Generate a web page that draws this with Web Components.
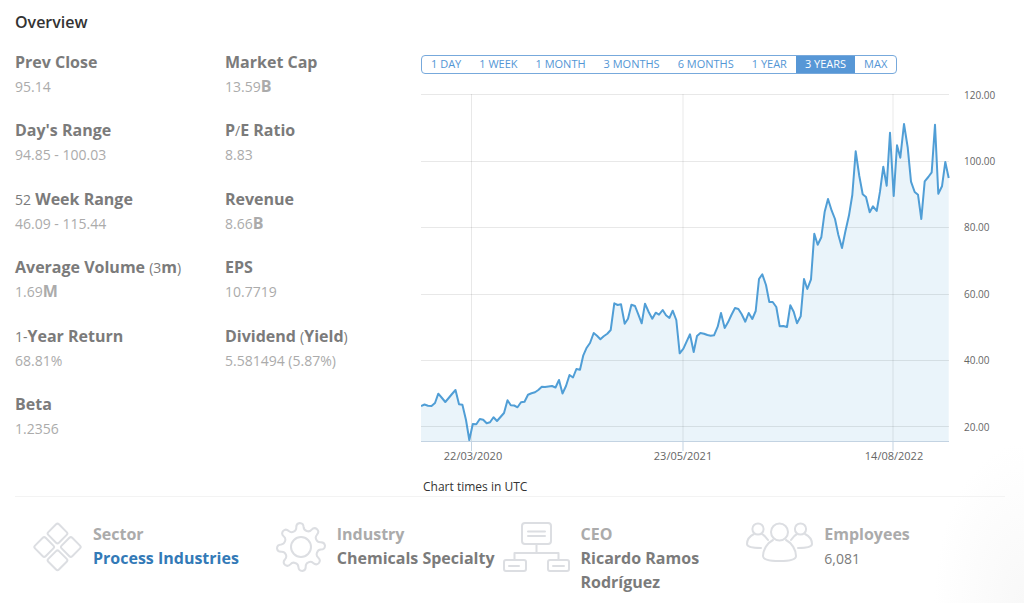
<!DOCTYPE html>
<html lang="en">
<head>
<meta charset="utf-8">
<meta name="viewport" content="width=device-width, initial-scale=1">
<title>Overview</title>
<style>
  html { min-height: 100%; background: #fff; }
  body { margin: 0; min-height: 100vh; font-family: "Open Sans", "Noto Sans", sans-serif;
    background: radial-gradient(ellipse 90px 160px at 100% 100%, #f8f8f8, #fff) no-repeat; }
</style>
</head>
<body>
<stock-overview></stock-overview>

<script>
const define = (name, html, setup) => {
  const template = document.createElement('template');
  template.innerHTML = html.trim();
  customElements.define(name, class extends HTMLElement {
    constructor() {
      super();
      this.attachShadow({ mode: 'open' }).append(template.content.cloneNode(true));
    }
    connectedCallback() { if (setup) setup(this, this.shadowRoot); }
  });
};

/* One bold label with its figure below. */
define('stat-item', `
  <style>
    :host { display: block; font-size: 16px; line-height: 24px; font-weight: 700; white-space: nowrap; }
    .label { color: #7b7b7b; }
    .value { color: #ababab; }
  </style>
  <div class="label"><slot name="label"></slot></div>
  <div class="value"><slot></slot></div>`);

/* Light numerals inside bold text. */
define('light-num', `<style>:host { font-size: 14px; font-weight: 400; line-height: 1; }</style><slot></slot>`);

define('range-tabs', `
  <style>
    :host { display: inline-flex; box-sizing: border-box; border: 1px solid #77a9dc; border-radius: 4px; overflow: hidden; }
    button { font: 400 11px/16px "Open Sans", sans-serif; color: #5396d5; background: none; border: 0; margin: 0;
      padding: 0 9px 1px; white-space: nowrap; cursor: pointer; }
    button[aria-pressed="true"] { background: #5797d6; color: #fff; }
  </style>`, (host, root) => {
  for (const name of host.getAttribute('options').split(',')) {
    const b = document.createElement('button');
    b.type = 'button';
    b.textContent = name;
    b.setAttribute('aria-pressed', name === host.getAttribute('selected'));
    b.onclick = () => root.querySelectorAll('button').forEach(x => x.setAttribute('aria-pressed', x === b));
    root.append(b);
  }
});

define('price-chart', `
  <style>
    :host { display: block; }
    svg { display: block; width: 100%; height: auto; font-family: "Open Sans", sans-serif; font-size: 11px; }
    .grid { stroke: #000; stroke-opacity: .09; fill: none; }
    .axis { stroke: #c3d3e2; fill: none; }
    .area { fill: #eaf4fa; }
    .line { fill: none; stroke: #509ed6; stroke-width: 2; stroke-linejoin: round; }
    text { fill: #666; }
    .dates { text-anchor: middle; }
    .prices { font-size: 10px; }
  </style>
  <svg viewBox="421 86 584 378" role="img" aria-label="Share price over three years">
    <path class="area"/>
    <path class="grid" d="M421 94.5H949M421 161.500H949M421 227.500H949M421 294.500H949M421 360.500H949M421 426.500H949M471.500 94V441M683 94V441M893 94V441"/>
    <path class="axis" d="M421 441.500H949M471.500 441V451M683 441V451M893 441V451"/>
    <path class="line"/>
    <g class="prices">
      <text x="964" y="99">120.00</text><text x="964" y="165">100.00</text><text x="964" y="231">80.00</text>
      <text x="964" y="298">60.00</text><text x="964" y="364">40.00</text><text x="964" y="431">20.00</text>
    </g>
    <g class="dates">
      <text x="473" y="460">22/03/2020</text><text x="683" y="460">23/05/2021</text><text x="894" y="460">14/08/2022</text>
    </g>
  </svg>`, (host, root) => {
  const prices = `421,406 424.5,404.5 428,405.7 431.5,406 435,403 438.3,393.7 442,398 445.3,402 448.7,398 452,394 455.5,390 459,404.3
    462.4,404.7 466,420 469.3,440 472.8,424 476.3,424.3 479.8,419 483.2,419.7 486.7,423.3 490,422.3 493.5,417.3 497,421 500.5,417
    504,413 507.5,400.3 510.8,405.3 514.2,405.5 517.5,407.3 521,402.3 524.5,401.8 528,394.7 531.5,393.3 535,392.3 538.3,390
    541.8,386.7 545,387 552,386 555.5,387.5 559,380 562.5,393.5 566,386 569.5,375 573,377.5 576.4,369 580,369.7 583.3,355.3
    586.7,347.7 590,343 593.7,333 597,335.7 600.4,339.3 603.7,336.3 607.3,333.7 610.7,330 614.3,303.3 617.7,305 621,304.3
    624.7,323.7 628,318.7 631.4,304.7 635,306 638.4,314.7 641.7,323.3 645,303.7 648.7,312 652.3,318.7 655.7,312.7 659,314.7
    662.7,310 666,315.3 669.4,318 672.7,310.7 676.3,320 679.7,353.3 683.4,348.7 686.7,341.3 690,334.3 693.7,352 697,336
    700.4,333 704,333.7 707.4,335 710.7,335.7 714,335.3 717.7,326.7 721,313 724.7,328 728,322.3 731.4,315 735,308 738.4,309
    741.7,314.3 745.3,321.7 748.7,313 752.3,319 755.7,311 759,279 762.3,274.3 766,285 769.3,302 772.7,302 776.3,307
    779.7,326.3 783.3,326 787,327 790.3,305.3 793.7,311.7 797,323.3 800.7,316.3 804,279 807.3,289 811,279.3 814.3,233.7
    817.7,244.7 821.3,237.3 824.7,211.7 828,199 831.7,210.7 835,219 838.3,234.7 842,248 845.3,231.7 849,215.3 852.3,195
    855.7,151.3 859.3,176 862.7,194.3 866,197 869.7,212.3 873,206.3 876.7,211 880,191.7 883.3,166.7 886.7,185.7 890,132.7
    893.7,196 897,145.3 900.3,157.7 904,124 907.7,147.3 911,181.7 914.7,192 918,194.7 921.3,219 924.7,181.3 928.3,177
    931.7,172.3 935,124.7 938.3,193.7 942,186.3 945.3,162 948.7,178`.trim();
  root.querySelector('.line').setAttribute('d', 'M' + prices);
  root.querySelector('.area').setAttribute('d', 'M' + prices + ' 948.7,441 421,441Z');
});

define('fact-card', `
  <style>
    :host { display: grid; grid-template-columns: 67px 1fr; column-gap: 11px; font-size: 16px; line-height: 24px; font-weight: 700; }
    .icon { display: flex; justify-content: flex-end; align-items: flex-start; }
    .name { color: #ababab; }
    .value { color: #7b7b7b; }
    ::slotted(a) { color: #337ab7; text-decoration: none; }
  </style>
  <div class="icon"><slot name="icon"></slot></div>
  <div><div class="name"><slot name="name"></slot></div><div class="value"><slot></slot></div></div>`);

define('stock-overview', `
  <style>
    :host { display: block; padding: 10px 19px 0 15px; }
    h1 { margin: 0; font-size: 16px; line-height: 24px; font-weight: 600; color: #333; }
    .top { display: grid; grid-template-columns: 406px 1fr; padding-top: 16px; border-bottom: 1px solid #f3f3f3; }
    .stats { display: grid; grid-template-columns: 210px 1fr; align-content: space-between; padding-bottom: 56px; }
    range-tabs { margin-top: 5px; }
    .chart { display: flex; flex-direction: column; align-items: flex-start; }
    price-chart { width: 100%; margin-top: 12px; }
    .note { margin: 14px 0 0 2px; font-size: 12px; line-height: 18px; color: #333; }
    .facts { display: grid; grid-template-columns: repeat(4, 1fr); padding: 25px 15px 0 0; }
    .facts svg { display: block; fill: none; stroke: #dcdee2; stroke-width: 2; stroke-linejoin: round; stroke-linecap: round; }
  </style>
  <h1>Overview</h1>
  <section class="top">
    <div class="stats">
      <stat-item><span slot="label">Prev Close</span><light-num>95.14</light-num></stat-item>
      <stat-item><span slot="label">Market Cap</span><light-num>13.59</light-num>B</stat-item>
      <stat-item><span slot="label">Day's Range</span><light-num>94.85 - 100.03</light-num></stat-item>
      <stat-item><span slot="label">P<light-num>/</light-num>E Ratio</span><light-num>8.83</light-num></stat-item>
      <stat-item><span slot="label"><light-num>52</light-num> Week Range</span><light-num>46.09 - 115.44</light-num></stat-item>
      <stat-item><span slot="label">Revenue</span><light-num>8.66</light-num>B</stat-item>
      <stat-item><span slot="label">Average Volume <light-num>(3</light-num>m<light-num>)</light-num></span><light-num>1.69</light-num>M</stat-item>
      <stat-item><span slot="label">EPS</span><light-num>10.7719</light-num></stat-item>
      <stat-item><span slot="label"><light-num>1-</light-num>Year Return</span><light-num>68.81%</light-num></stat-item>
      <stat-item><span slot="label">Dividend <light-num>(</light-num>Yield<light-num>)</light-num></span><light-num>5.581494 (5.87%)</light-num></stat-item>
      <stat-item><span slot="label">Beta</span><light-num>1.2356</light-num></stat-item>
    </div>
    <div class="chart">
      <range-tabs options="1 DAY,1 WEEK,1 MONTH,3 MONTHS,6 MONTHS,1 YEAR,3 YEARS,MAX" selected="3 YEARS"></range-tabs>
      <price-chart></price-chart>
      <p class="note">Chart times in UTC</p>
    </div>
  </section>
  <section class="facts">
    <fact-card>
      <svg slot="icon" width="49" height="50" viewBox="0 0 49 50" aria-hidden="true">
        <rect x="-7.500" y="-7.500" width="15" height="15" rx="2" transform="translate(24.500 11.500) rotate(45)"/>
        <rect x="-7.500" y="-7.500" width="15" height="15" rx="2" transform="translate(11.200 25) rotate(45)"/>
        <rect x="-7.500" y="-7.500" width="15" height="15" rx="2" transform="translate(37.800 25) rotate(45)"/>
        <rect x="-7.500" y="-7.500" width="15" height="15" rx="2" transform="translate(24.500 38.300) rotate(45)"/>
      </svg>
      <span slot="name">Sector</span><a href="#process-industries">Process Industries</a>
    </fact-card>
    <fact-card>
      <svg slot="icon" width="50" height="50" viewBox="0 0 50 50" aria-hidden="true">
        <circle cx="25" cy="25" r="10"/><path class="gear"/>
      </svg>
      <span slot="name">Industry</span>Chemicals Specialty
    </fact-card>
    <fact-card>
      <svg slot="icon" width="67" height="50" viewBox="0 0 67 50" aria-hidden="true">
        <rect x="19" y="1" width="29" height="21" rx="3"/><path d="M25 9.500H42M25 14H42M33.500 22V31M11.500 37V31H55.500V37M6 44H16M50 44H61"/>
        <rect x="1" y="38" width="22" height="11" rx="2"/><rect x="45" y="38" width="21" height="11" rx="2"/>
      </svg>
      <span slot="name">CEO</span>Ricardo Ramos Rodríguez
    </fact-card>
    <fact-card>
      <svg slot="icon" width="67" height="50" viewBox="0 0 67 50" aria-hidden="true">
        <circle cx="33.500" cy="10" r="8.500"/><circle cx="12" cy="7" r="5.600"/><circle cx="54.500" cy="7" r="5.600"/>
        <path d="M27 18C21 21 17 28 17 34C17 38 25 39 33.500 39S50 38 50 34C50 28 46 21 40 18"/>
        <path d="M8 12C4 14 1 18 1 22C1 25 7 26 15 26M16 12C18 13 20 15 22 18"/>
        <path d="M59 12C63 14 66 18 66 22C66 25 60 26 52 26M51 12C49 13 47 15 45 18"/>
      </svg>
      <span slot="name">Employees</span><light-num>6,081</light-num>
    </fact-card>
  </section>`, (host, root) => {
  // Eight rounded teeth: each swings out to the rim and back to a rounded valley.
  const p = (r, deg) => {
    const a = (deg - 93) * Math.PI / 180;
    return (25 + r * Math.cos(a)).toFixed(1) + ' ' + (25 + r * Math.sin(a)).toFixed(1);
  };
  let d = 'M' + p(17, -22.5);
  for (let i = 0; i < 8; i++) {
    const t = i * 45;
    d += `C${p(17, t - 16)} ${p(17.6, t - 12)} ${p(20, t - 10.5)}C${p(22.5, t - 9.5)} ${p(24, t - 7)} ${p(24, t)}`
       + `C${p(24, t + 7)} ${p(22.5, t + 9.5)} ${p(20, t + 10.5)}C${p(17.6, t + 12)} ${p(17, t + 16)} ${p(17, t + 22.5)}`;
  }
  root.querySelector('.gear').setAttribute('d', d + 'Z');
});
</script>
</body>
</html>
